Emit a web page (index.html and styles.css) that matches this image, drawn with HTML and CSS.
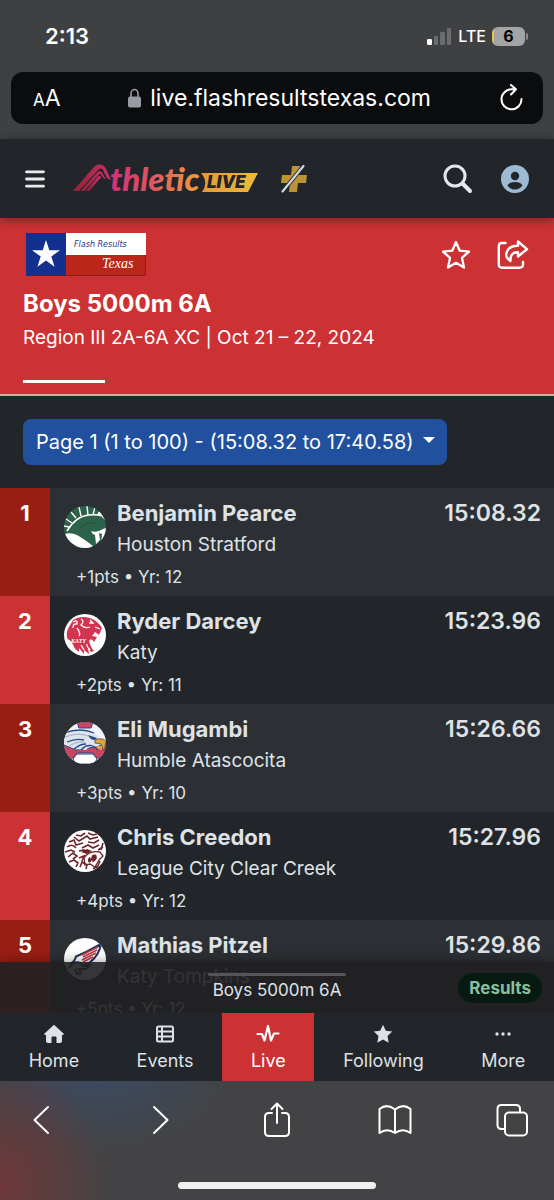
FILE: index.html
```html
<!DOCTYPE html>
<html lang="en">
<head>
    <meta charset="utf-8">
    <meta name="viewport" content="width=device-width, initial-scale=1">
    <title>Boys 5000m 6A - AthleticLIVE</title>
    <link rel="stylesheet" href="styles.css">
</head>
<body>
    <div class="browser-top">
        <div class="status">
            <span class="clock">2:13</span>
            <svg class="signal" width="25" height="17" viewBox="0 0 25 17">
                <rect x="0" y="11" width="5" height="6" rx="1.3" fill="#fff"/>
                <rect x="7" y="8" width="4" height="9" rx="1.3" fill="#6b6c6e"/>
                <rect x="13" y="4" width="5" height="13" rx="1.3" fill="#6b6c6e"/>
                <rect x="20" y="0" width="4" height="17" rx="1.3" fill="#6b6c6e"/>
            </svg>
            <span class="carrier">LTE</span>
            <span class="battery">6</span>
        </div>
        <div class="address">
            <button class="text-size" aria-label="Text size"><small>A</small>A</button>
            <label class="url">
                <svg width="13" height="20" viewBox="0 0 13 20"><path d="M3 9V5.500a3.500 4 0 0 1 7 0V9" fill="none" stroke="#9a9aa2" stroke-width="1.600"/><rect y="8.500" width="13" height="11" rx="2" fill="#9a9aa2"/></svg>
                <input type="text" value="live.flashresultstexas.com" aria-label="Address">
            </label>
            <button aria-label="Reload">
                <svg width="24" height="28" viewBox="0 0 24 28" fill="none" stroke="#fff" stroke-width="2" stroke-linecap="round" stroke-linejoin="round"><path d="M15.500 5.300H12A10 10 0 1 0 21.500 15M11 1l5 4.300-5 5.200"/></svg>
            </button>
        </div>
    </div>

    <header class="app-bar">
        <button aria-label="Menu">
            <svg width="20" height="18" viewBox="0 0 20 18" stroke="#e9ecef" stroke-width="2.800" stroke-linecap="round"><path d="M1.500 1.800h17M1.500 9h17M1.500 16.200h17"/></svg>
        </button>
        <a href="#" class="brand" aria-label="AthleticLIVE">
            <svg width="186" height="34" viewBox="0 -2 186 34">
                <defs>
                    <linearGradient id="fire" gradientUnits="userSpaceOnUse" x1="38" y1="0" x2="128" y2="0">
                        <stop offset="0" stop-color="#d0307a"/><stop offset=".45" stop-color="#de5560"/><stop offset="1" stop-color="#eda13c"/>
                    </linearGradient>
                    <linearGradient id="gold" x1="0" x2="1"><stop offset="0" stop-color="#e59a38"/><stop offset="1" stop-color="#ecbc3c"/></linearGradient>
                    <linearGradient id="track" x1="0" x2="1"><stop offset="0" stop-color="#8f2434"/><stop offset="1" stop-color="#cb2f68"/></linearGradient>
                </defs>
                <path d="M0 27L20 4Q24-1 29 1Q32 2 34 7L38 16L34 14L30 6Q28 3 25 6L6 27Z" fill="url(#track)"/>
                <path d="M7.500 27L24 8.500Q27 5.500 29 8.500L33 15.500L30 13.500L28 10.500Q27 9 25.500 11L11.500 27Z" fill="url(#track)"/>
                <path d="M13 27L25 12.500L27 11.500L28 13.500L16 27Z" fill="url(#track)"/>
                <text x="37" y="27" class="logo-word" fill="url(#fire)">thletic</text>
                <path d="M128 9H185L175 28H129Q136 18 128 9Z" fill="url(#gold)"/>
                <text x="134" y="24" class="logo-live">LIVE</text>
            </svg>
        </a>
        <a href="#" class="plus" aria-label="Plus">
            <svg width="28" height="30" viewBox="0 0 28 30"><path d="M12 2h8l-1 9h8l-1 8h-8l-1 9h-8l1-9H1l1-8h9z" fill="#bd9434"/><path d="M2.500 27.500L23.500 2" stroke="#22262a" stroke-width="4"/><path d="M2.500 27.500L23.500 2" stroke="#cbd9e6" stroke-width="2.200" stroke-linecap="round"/></svg>
        </a>
        <button class="push" aria-label="Search">
            <svg width="30" height="30" viewBox="0 0 30 30" fill="none" stroke="#e6e8ee"><circle cx="12" cy="12" r="10" stroke-width="3"/><path d="M19.500 19.500l7.500 7.500" stroke-width="4" stroke-linecap="round"/></svg>
        </button>
        <button aria-label="Account">
            <svg width="28" height="28" viewBox="0 0 28 28"><circle cx="14" cy="14" r="14" fill="#9dbad4"/><circle cx="14" cy="11" r="4.200" fill="#22262a"/><path d="M6.500 20.500Q8 17 14 17T21.500 20.500Q18.500 24.500 14 24.500T6.500 20.500Z" fill="#22262a"/></svg>
        </button>
    </header>

    <section class="hero">
        <div class="hero-top">
            <svg width="120" height="43" viewBox="0 0 120 43">
                <rect width="120" height="43" fill="#fff"/>
                <rect width="40" height="43" fill="#13308f"/>
                <path d="M20 7l3.300 10.200H34l-8.700 6.300 3.300 10.300L20 27.500l-8.600 6.300 3.300-10.300L6 17.200h10.700z" fill="#fff"/>
                <rect x="40" y="22" width="80" height="21" fill="#bb261b"/>
                <path d="M40 42.500h79.500V22" fill="none" stroke="#8d1d17"/>
                <text x="48" y="14" class="flag-flash">Flash Results</text>
                <text x="76" y="35" class="flag-texas">Texas</text>
            </svg>
            <button class="push" aria-label="Follow">
                <svg width="30" height="30" viewBox="0 0 30 30"><path d="M14 2l3.700 8.700 9.300.9-7 6.300 2 9.600-8-4.800-8 4.800 2-9.600-7-6.300 9.300-.9z" fill="none" stroke="#fff" stroke-width="2.300" stroke-linejoin="round"/></svg>
            </button>
            <button aria-label="Share">
                <svg width="32" height="30" viewBox="0 0 32 30" fill="none" stroke="#fff" stroke-width="2.400" stroke-linejoin="round" stroke-linecap="round"><path d="M8.500 3H5Q1.800 3 1.800 6.200V24.500Q1.800 27.700 5 27.700H22Q26 27.700 26 24.500V22"/><path d="M21 1.500L30 9.200L21 16.500V12.300Q13 12 13.500 21Q6 16 11.500 9Q15 5.500 21 5.700Z"/></svg>
            </button>
        </div>
        <h1>Boys 5000m 6A</h1>
        <p>Region III 2A-6A XC | Oct 21 – 22, 2024</p>
        <span class="tab-line"></span>
    </section>

    <main>
        <div class="scroll">
            <div class="pager">
                <select aria-label="Results page">
                    <option>Page 1 (1 to 100) - (15:08.32 to 17:40.58)</option>
                </select>
                <svg width="12" height="10" viewBox="0 0 12 10"><path d="M0 0h12L6 6z" fill="#fff"/></svg>
            </div>
            <ol class="results">
                <li>
                    <span class="rank">1</span>
                    <div class="entry">
                        <svg class="crest" viewBox="0 0 42 42">
                            <g clip-path="url(#round)">
                                <rect width="42" height="42" fill="#2d624a"/>
                                <path d="M3 25Q12 10 25 9Q34 8 37 10" fill="none" stroke="#fff" stroke-width="1.500"/>
                                <path d="M2 13l6 4M7 6l5 6M15 1l2 9M23 0l1 9M31 1l-2 8M0 20l5 1" stroke="#fff" stroke-width="1.400"/>
                                <path d="M36 3Q40 7 42 15L37 10L33 9Z" fill="#fff"/>
                                <path d="M0 28Q7 26 13 29Q20 33 29 40L24 43H0Z" fill="#fff"/>
                                <path d="M27 25Q33 27 39 23L42 22V36L37 38L38 28L35 27L36 34L32 38L31 29Q28 28 27 25Z" fill="#fff"/>
                                <path d="M16 22Q22 16 32 17" fill="none" stroke="#234f3b"/>
                            </g>
                        </svg>
                        <div class="who"><h2>Benjamin Pearce</h2><p>Houston Stratford</p></div>
                        <time>15:08.32</time>
                        <p class="meta">+1pts • Yr: 12</p>
                    </div>
                </li>
                <li>
                    <span class="rank">2</span>
                    <div class="entry">
                        <svg class="crest" viewBox="0 0 42 42">
                            <g clip-path="url(#round)">
                                <rect width="42" height="42" fill="#fff"/>
                                <path d="M9 6Q16 1 26 4Q34 7 38 14L35 21L31 18L28 22L33 23L30 28Q27 23 25 27Q27 34 30 37L27 38L24 34L25 40L20 36L20 40L15 34V38Q9 34 9 29L4 25Q3 19 6 17L4 26Q1 19 5 13Z" fill="#d33450"/>
                                <path d="M9 8Q14 5 13 10Q9 9 9 14M17 5Q21 7 17 11Q21 15 26 13M26 6L29 9L25 9M31 13L36 15M13 14Q17 19 15 23M23 29Q22 32 26 36M17 31L20 36" fill="none" stroke="#fff" stroke-width="1.300"/>
                                <path d="M6 23L24 21V30L9 31Z" fill="#d33450"/>
                                <text x="7" y="29" class="crest-text">KATY</text>
                            </g>
                        </svg>
                        <div class="who"><h2>Ryder Darcey</h2><p>Katy</p></div>
                        <time>15:23.96</time>
                        <p class="meta">+2pts • Yr: 11</p>
                    </div>
                </li>
                <li>
                    <span class="rank">3</span>
                    <div class="entry">
                        <svg class="crest" viewBox="0 0 42 42">
                            <g clip-path="url(#round)">
                                <rect width="42" height="42" fill="#f2f4fa"/>
                                <path d="M13 0H29L27 6H15Z" fill="#cd4460" stroke="#284a86"/>
                                <path d="M0 23L12 28L31 25L42 22V36H32L29 31H13L9 36H0Z" fill="#cd4460" stroke="#284a86"/>
                                <path d="M0 10Q18 5 31 11L38 18L34 25Q27 22 22 28L11 27L0 21Z" fill="#dfe4ee"/>
                                <path d="M0 11Q17 5 30 11M3 20Q12 16 20 18M10 27Q16 22 22 22M17 28Q22 22 29 24L34 28" fill="none" stroke="#284a86" stroke-width="1.300"/>
                                <path d="M1 15Q14 10 24 14M5 24Q13 19 21 20" fill="none" stroke="#a9b6cf" stroke-width="1.200"/>
                                <path d="M24 13L33 16L31 18Q26 18 24 13Z" fill="#284a86"/>
                                <path d="M31 18Q38 15 42 19L40 29L37 22L31 21Z" fill="#dba544" stroke="#5f4930" stroke-width=".8"/>
                                <path d="M32 24L38 24L38 28L34 27Z" fill="#dba544"/>
                                <path d="M13 32H29L33 37L30 42H12L9 37Z" fill="#fff" stroke="#284a86"/>
                            </g>
                        </svg>
                        <div class="who"><h2>Eli Mugambi</h2><p>Humble Atascocita</p></div>
                        <time>15:26.66</time>
                        <p class="meta">+3pts • Yr: 10</p>
                    </div>
                </li>
                <li>
                    <span class="rank">4</span>
                    <div class="entry">
                        <svg class="crest" viewBox="0 0 42 42">
                            <g clip-path="url(#round)">
                                <rect width="42" height="42" fill="#fff"/>
                                <g fill="none" stroke="#6e2428" stroke-width="1.600">
                                    <path d="M10 7L15 11L23 6L26 9L34 7M12 5L17 6L21 3M24 3L29 5L33 4M5 12L10 10L12 15L19 13M3 17Q8 13 12 18M1 22L7 20L11 22M4 27L9 23L13 26L9 29M5 32L10 30L14 33L12 37M16 37L18 32L23 35L22 39M15 28L20 26L18 31M18 18L24 15L29 18L35 15M24 12L30 13L35 10M34 20L39 17M15 21L20 20L22 23"/>
                                    <path d="M20 28Q25 20 36 22L39 26L35 30L31 37L26 34L21 35Z" stroke-width="1.300"/>
                                    <path d="M36 31L33 38M39 13L37 20M29 39L34 36" />
                                </g>
                                <path d="M24 29Q28 23 34 25L32 30L28 33L24 32Z" fill="#6e2428"/>
                                <path d="M25 25l2 4 1-4M32 24l1 4 2-3M26 33l2-3 1 3" fill="#fff"/>
                                <path d="M17 22l6-3 5 2-5 3z" fill="#6e2428"/>
                            </g>
                        </svg>
                        <div class="who"><h2>Chris Creedon</h2><p>League City Clear Creek</p></div>
                        <time>15:27.96</time>
                        <p class="meta">+4pts • Yr: 12</p>
                    </div>
                </li>
                <li>
                    <span class="rank">5</span>
                    <div class="entry">
                        <svg class="crest" viewBox="0 0 42 42">
                            <g clip-path="url(#round)">
                                <rect width="42" height="42" fill="#fff"/>
                                <path d="M37 6Q35 18 25 25L19 28M37 6L22 14L11 19M12 19L10 23L6 26M6 27Q10 23 17 25L18 28L26 27L22 31L15 31L17 35L13 36L11 31M4 30L9 27" fill="none" stroke="#24365d" stroke-width="2"/>
                                <path d="M34 9L18 17M33 12L19 19M32 15L18 22M29 19L19 24" stroke="#bd3943" stroke-width="1.600"/>
                            </g>
                        </svg>
                        <div class="who"><h2>Mathias Pitzel</h2><p>Katy Tompkins</p></div>
                        <time>15:29.86</time>
                        <p class="meta">+5pts • Yr: 12</p>
                    </div>
                </li>
            </ol>
        </div>
        <div class="drawer">
            <span class="grip"></span>
            <span class="drawer-title">Boys 5000m 6A</span>
            <a href="#" class="badge">Results</a>
        </div>
    </main>

    <nav class="tabs">
        <a href="#"><svg viewBox="0 0 20 20" fill="currentColor"><path d="M10 .8L20 10q-.5 1.200-2 .8V17q0 2-2 2h-3.500v-5.500q0-1-1-1h-3q-1 0-1 1V19H4q-2 0-2-2v-6.200Q.5 11.200 0 10z"/></svg>Home</a>
        <a href="#"><svg viewBox="0 0 20 20" fill="none" stroke="currentColor" stroke-width="2"><rect x="2" y="2.500" width="16" height="15" rx="1.500"/><path d="M2 7.500h16M2 12.500h16M7 3v14"/></svg>Events</a>
        <a href="#" class="active"><svg viewBox="0 0 24 20" fill="none" stroke="currentColor" stroke-width="2.200" stroke-linecap="round" stroke-linejoin="round"><path d="M1.500 10H6l2.500 6.500L12 2l3 14.500L18 9.500h4.500"/></svg>Live</a>
        <a href="#"><svg viewBox="0 0 20 20" fill="currentColor"><path d="M10 .8l2.800 6 6.400.8-4.700 4.500 1.200 6.600-5.700-3.200-5.700 3.200 1.200-6.600L.8 7.600l6.400-.8z"/></svg>Following</a>
        <a href="#"><svg viewBox="0 0 20 20" fill="currentColor"><circle cx="4" cy="10" r="1.700"/><circle cx="10" cy="10" r="1.700"/><circle cx="16" cy="10" r="1.700"/></svg>More</a>
    </nav>

    <footer class="browser-bottom">
        <div class="tools">
            <button aria-label="Back"><svg width="34" height="38" viewBox="0 0 34 38"><path d="M24 6L10.500 19L24 32"/></svg></button>
            <button aria-label="Forward"><svg width="34" height="38" viewBox="0 0 34 38"><path d="M12 6l13.500 13L12 32"/></svg></button>
            <button aria-label="Share page"><svg width="34" height="38" viewBox="0 0 34 38"><path d="M12 12H9q-4 0-4 4v15q0 4 4 4h16q4 0 4-4V16q0-4-4-4h-3M17 22V2.500M11.500 8l5.500-5.500L22.500 8"/></svg></button>
            <button aria-label="Bookmarks"><svg width="34" height="38" viewBox="0 0 34 38"><path d="M17 8.500Q9 2 1.500 8V32Q9 26.500 17 32Q25 26.500 32.500 32V8Q25 2 17 8.500ZM17 8.500V32"/></svg></button>
            <button aria-label="Tabs"><svg width="34" height="38" viewBox="0 0 34 38"><path d="M8.500 28H5.500q-4 0-4-4V8q0-4 4-4H20q4 0 4 4V11"/><rect x="9" y="11.500" width="22" height="23" rx="4"/></svg></button>
        </div>
        <span class="home-bar"></span>
    </footer>

    <svg class="defs"><clipPath id="round"><circle cx="21" cy="21" r="21"/></clipPath></svg>
</body>
</html>
```
FILE: styles.css
```css
* {box-sizing: border-box;}
body {
    margin: 0;
    height: 100vh;
    display: flex;
    flex-direction: column;
    background: #22262a;
    color: #dee2e6;
    font-family: Inter, "Liberation Sans", sans-serif;
    font-size: 18px;}
h1, h2, p, ol {margin: 0; padding: 0;}
button {
    display: flex;
    align-items: center;
    justify-content: center;
    padding: 0;
    border: 0;
    background: none;
    color: #fff;
    font-family: inherit;}
a {color: inherit; text-decoration: none;}
svg {display: block; flex: none;}
.defs {position: absolute; width: 0; height: 0;}
.push {margin-left: auto;}

/* browser top */
.browser-top {
    padding: 0 11px 15px;
    background: #3f4042;
    color: #fff;}
.status {
    display: flex;
    align-items: center;
    height: 72px;
    padding: 0 18px 0 34px;}
.clock {font-size: 22px; font-weight: 600;}
.signal {margin-left: auto;}
.carrier {font-size: 16px; font-weight: 500; margin: 0 6px;}
.battery {
    position: relative;
    width: 33px;
    height: 19px;
    border-radius: 6px;
    background: linear-gradient(90deg, #e8c54a 2px, #a3a4a6 2px);
    color: #000;
    font-size: 16px;
    font-weight: 700;
    line-height: 19px;
    text-align: center;}
.battery::after {
    content: "";
    position: absolute;
    left: 34px;
    top: 6px;
    width: 2px;
    height: 7px;
    border-radius: 0 2px 2px 0;
    background: #8a8b8d;}
.address {
    display: flex;
    align-items: center;
    justify-content: space-between;
    height: 52px;
    padding: 0 19px 0 22px;
    border-radius: 12px;
    background: #0b0c0e;}
.text-size {align-items: baseline; font-size: 23px;}
.text-size small {font-size: 17px;}
.url {display: flex; align-items: center; gap: 9px;}
.url input {
    width: 282px;
    padding: 0;
    border: 0;
    background: none;
    color: #fff;
    font-family: inherit;
    font-size: 23px;}

/* app bar */
.app-bar {
    position: relative;
    z-index: 1;
    display: flex;
    align-items: center;
    height: 79px;
    padding: 0 25px;
    box-shadow: 0 2px 10px rgba(0, 0, 0, .4);
    background: #22262a;}
.app-bar .push {margin-right: 28px;}
.brand {margin-left: 28px;}
.plus {margin-left: 21px;}
.logo-word {font: italic 900 33px Lato, sans-serif;}
.logo-live {font: italic 900 17px Inter, sans-serif; fill: #22262a;}

/* event heading */
.hero {
    padding: 15px 23px 11px;
    border-bottom: 2px solid #e2a5a5;
    background: #cc3234;
    color: #fff;}
.hero-top {
    display: flex;
    align-items: center;
    padding: 0 2px 0 3px;}
.hero-top .push {margin-right: 25px;}
.flag-flash {font: italic 8px "DejaVu Sans", sans-serif; fill: #1d3894;}
.flag-texas {font: italic 14px "Liberation Serif", serif; fill: #fff;}
h1 {
    margin-top: 11px;
    font-size: 24px;
    font-weight: 700;
    line-height: 34px;}
.hero p {font-size: 19px; line-height: 34px;}
.tab-line {
    display: block;
    width: 82px;
    height: 3px;
    margin-top: 25px;
    background: #fff;}

/* results */
main {
    position: relative;
    flex: 1;
    min-height: 0;}
.scroll {
    height: 100%;
    overflow-y: auto;
    scrollbar-width: none;}
.pager {
    display: inline-grid;
    align-items: center;
    margin: 23px;
    vertical-align: top;}
.pager select, .pager svg {grid-area: 1 / 1;}
.pager svg {justify-self: end; margin-right: 12px; pointer-events: none;}
.pager select {
    appearance: none;
    height: 46px;
    padding: 0 33px 0 13px;
    border: 0;
    border-radius: 8px;
    background: #21509f;
    color: #fff;
    font-family: inherit;
    font-size: 20px;}
.results {list-style: none;}
.results li {
    display: flex;
    height: 108px;
    background: #22262a;}
.results li:nth-child(odd) {background: #2c3034;}
.rank {
    width: 50px;
    padding-top: 10px;
    background: #cc3234;
    color: #fff;
    font-size: 22px;
    font-weight: 700;
    line-height: 30px;
    text-align: center;}
li:nth-child(odd) .rank {background: #981e14;}
.entry {
    flex: 1;
    display: grid;
    grid-template-columns: 42px 1fr auto;
    column-gap: 11px;
    align-content: start;
    padding: 10px 13px 0 14px;}
.crest {width: 42px; height: 42px; margin-top: 8px;}
.crest-text {font: italic 700 6px "Liberation Serif", serif; fill: #fff;}
h2, time {
    font-size: 22px;
    font-weight: 700;
    line-height: 30px;}
time {font-size: 23px; font-weight: 600;}
.who p {font-size: 19px; line-height: 34px;}
.meta {
    grid-column: 1 / -1;
    padding-left: 12px;
    font-size: 17px;
    line-height: 30px;}

/* drawer lying over the list */
.drawer {
    position: absolute;
    inset: auto 0 0 0;
    display: grid;
    grid-template-columns: 1fr auto 1fr;
    align-items: center;
    height: 51px;
    padding: 0 12px;
    background: rgba(32, 32, 34, .9);
    box-shadow: 0 0 12px rgba(0, 0, 0, .4);}
.grip {
    position: absolute;
    top: 11px;
    left: calc(50% - 69px);
    width: 138px;
    height: 3px;
    border-radius: 2px;
    background: #545557;}
.drawer-title {
    grid-column: 2;
    padding-top: 5px;
    font-size: 17px;}
.badge {
    justify-self: end;
    padding: 0 11px;
    border-radius: 15px;
    background: #071a12;
    color: #8abf9f;
    font-size: 17px;
    font-weight: 700;
    line-height: 30px;}

.tabs {
    display: flex;
    position: relative;
    height: 68px;
    background: #22262a;}
.tabs a {
    flex: 1 1 auto;
    display: flex;
    flex-direction: column;
    align-items: center;
    padding-top: 11px;
    font-size: 18px;
    line-height: 32px;
    gap: 1px;}
.tabs svg {height: 20px;}
.tabs .active {background: #cc3234; color: #fff;}

/* browser bottom */
.browser-bottom {
    height: 119px;
    padding: 20px 24px 0;
    background:
        radial-gradient(ellipse 110px 130px at 0 90%, #70383a, rgba(112, 56, 58, 0)),
        radial-gradient(ellipse 130px 70px at 100px 0, #3c4a5f, rgba(60, 74, 95, 0)),
        #434345;}
.tools {display: flex; justify-content: space-between;}
.tools svg {
    fill: none;
    stroke: #fff;
    stroke-width: 2;
    stroke-linecap: round;
    stroke-linejoin: round;}
.home-bar {
    display: block;
    width: 198px;
    height: 7px;
    margin: 43px auto 0;
    border-radius: 4px;
    background: #f0f0f0;}
```
